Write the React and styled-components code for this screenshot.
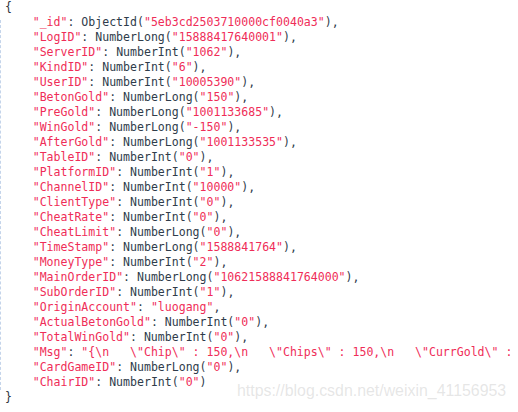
import React from "react";
import styled, { createGlobalStyle } from "styled-components";

const Global = createGlobalStyle`
  html, body { margin: 0; padding: 0; background: #ffffff; }
`;

const Page = styled.div`
  position: relative;
  width: 518px;
  height: 412px;
  overflow: hidden;
  background: #ffffff;
`;

const Gutter = styled.div`
  display: flex;
  height: 100%;
`;

const Rule = styled.div`
  width: 0;
  border-left: 1px dashed #c4d4ea;
  margin-top: 20px;
  height: 370px;
`;

const Code = styled.div`
  padding-left: 4px;
  font-family: "DejaVu Sans Mono", "Liberation Mono", monospace;
  font-size: 11.55px;
  line-height: 15px;
  color: #2f3c4b;
  white-space: pre;
  flex: 1;
  overflow: hidden;
`;

const Line = styled.div`
  height: 15px;
  padding-left: ${(p) => (p.$indent ? "27.7px" : "0")};
`;

const Str = styled.span`
  color: #ef2d58;
`;

const Brace = styled.span`
  color: #2f3540;
`;

const Watermark = styled.div`
  position: absolute;
  left: 237px;
  top: 382px;
  font-family: "Liberation Sans", Arial, sans-serif;
  font-size: 15.9px;
  line-height: 18px;
  color: rgba(200, 200, 200, 0.45);
  white-space: nowrap;
  pointer-events: none;
`;

const rows = [
  ["_id", "ObjectId", "5eb3cd2503710000cf0040a3"],
  ["LogID", "NumberLong", "15888417640001"],
  ["ServerID", "NumberInt", "1062"],
  ["KindID", "NumberInt", "6"],
  ["UserID", "NumberInt", "10005390"],
  ["BetonGold", "NumberLong", "150"],
  ["PreGold", "NumberLong", "1001133685"],
  ["WinGold", "NumberLong", "-150"],
  ["AfterGold", "NumberLong", "1001133535"],
  ["TableID", "NumberInt", "0"],
  ["PlatformID", "NumberInt", "1"],
  ["ChannelID", "NumberInt", "10000"],
  ["ClientType", "NumberInt", "0"],
  ["CheatRate", "NumberInt", "0"],
  ["CheatLimit", "NumberLong", "0"],
  ["TimeStamp", "NumberLong", "1588841764"],
  ["MoneyType", "NumberInt", "2"],
  ["MainOrderID", "NumberLong", "10621588841764000"],
  ["SubOrderID", "NumberInt", "1"],
  ["OriginAccount", null, "luogang"],
  ["ActualBetonGold", "NumberInt", "0"],
  ["TotalWinGold", "NumberInt", "0"],
  ["Msg", null, '{\\n   \\"Chip\\" : 150,\\n   \\"Chips\\" : 150,\\n   \\"CurrGold\\" :', true],
  ["CardGameID", "NumberLong", "0"],
  ["ChairID", "NumberInt", "0"],
];

function Row({ k, fn, v, last, open }) {
  return (
    <Line $indent>
      <Str>"{k}"</Str>
      {": "}
      {fn ? (
        <>
          {fn}(<Str>"{v}"</Str>)
        </>
      ) : (
        <Str>"{v}{open ? "" : '"'}</Str>
      )}
      {last || open ? "" : ","}
    </Line>
  );
}

export default function App() {
  return (
    <Page>
      <Global />
      <Gutter>
        <Rule />
        <Code>
          <Line>
            <Brace>{"{"}</Brace>
          </Line>
          {rows.map((r, i) => (
            <Row
              key={r[0]}
              k={r[0]}
              fn={r[1]}
              v={r[2]}
              open={r[3]}
              last={i === rows.length - 1}
            />
          ))}
          <Line>
            <Brace>{"}"}</Brace>
          </Line>
        </Code>
      </Gutter>
      <Watermark>https://blog.csdn.net/weixin_41156953</Watermark>
    </Page>
  );
}
